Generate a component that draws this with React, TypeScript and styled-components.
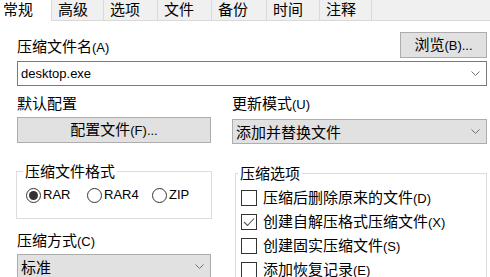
import React from "react";
import styled, { createGlobalStyle } from "styled-components";

const CJK = `"Noto Sans CJK SC", "Noto Sans", sans-serif`;
const LAT = `"Liberation Sans", "Noto Sans", sans-serif`;

const Global = createGlobalStyle`
  html, body { margin: 0; padding: 0; background: #ffffff; }
  body { font-family: ${CJK}; font-size: 15px; color: #000; }
`;

const Page = styled.div`
  width: 490px;
  height: 277px;
  overflow: hidden;
  background: #ffffff;
  font-family: ${CJK};
  font-size: 15px;
  line-height: 20px;
  color: #000;
`;

const Lat = styled.span`
  font-family: ${LAT};
  font-size: 13px;
`;

const TabStrip = styled.div`
  display: flex;
  height: 21px;
`;

const Tab = styled.div<{ $w: number; $active?: boolean }>`
  box-sizing: border-box;
  flex: none;
  width: ${(p) => p.$w}px;
  height: 21px;
  padding-left: ${(p) => (p.$active ? 3 : 6)}px;
  line-height: 18px;
  white-space: nowrap;
  background: ${(p) => (p.$active ? "#ffffff" : "#f0f0f0")};
  border-left: ${(p) => (p.$active ? "none" : "1px solid #d9d9d9")};
  border-bottom: ${(p) => (p.$active ? "none" : "1px solid #d9d9d9")};
`;

const TabFiller = styled.div`
  flex: 1;
  background: #f0f0f0;
  border-left: 1px solid #d9d9d9;
  border-bottom: 1px solid #d9d9d9;
`;

const Body = styled.div`
  padding: 11px 3px 0 17px;
`;

const HeaderRow = styled.div`
  display: flex;
  justify-content: space-between;
  align-items: flex-end;
`;

const Label = styled.div<{ $mt?: number }>`
  margin-top: ${(p) => p.$mt ?? 0}px;
  line-height: 20px;
  white-space: nowrap;
`;

const Button = styled.button<{ $w?: number; $mt?: number }>`
  box-sizing: border-box;
  display: block;
  width: ${(p) => (p.$w ? `${p.$w}px` : "100%")};
  height: 26px;
  margin-top: ${(p) => p.$mt ?? 0}px;
  padding: 0;
  background: #e1e1e1;
  border: 1px solid #adadad;
  border-radius: 0;
  font-family: ${CJK};
  font-size: 15px;
  line-height: 20px;
  color: #000;
  text-align: center;
  white-space: nowrap;
`;

const Combo = styled.div<{ $editable?: boolean; $mt?: number }>`
  box-sizing: border-box;
  display: flex;
  align-items: center;
  justify-content: space-between;
  height: 25px;
  margin-top: ${(p) => p.$mt ?? 0}px;
  padding: 0 6px 0 3px;
  background: ${(p) => (p.$editable ? "#ffffff" : "#e1e1e1")};
  border: 1px solid ${(p) => (p.$editable ? "#7a7a7a" : "#adadad")};
  white-space: nowrap;
`;

const Columns = styled.div`
  display: grid;
  grid-template-columns: 194px 255px;
  column-gap: 21px;
  margin-top: 7px;
`;

const Column = styled.div`
  display: flex;
  flex-direction: column;
`;

const Group = styled.fieldset<{ $ml: number; $w: number; $mt: number; $pt: number; $pb: number }>`
  box-sizing: border-box;
  width: ${(p) => p.$w}px;
  margin: ${(p) => p.$mt}px 0 0 ${(p) => p.$ml}px;
  padding: ${(p) => p.$pt}px 0 ${(p) => p.$pb}px 0;
  border: 1px solid #dcdcdc;
  min-width: 0;
`;

const Legend = styled.legend<{ $indent: number }>`
  margin-left: ${(p) => p.$indent}px;
  padding: 0 2px;
  line-height: 20px;
  white-space: nowrap;
`;

const RadioRow = styled.div`
  display: flex;
  align-items: center;
  height: 20px;
  padding-left: 9px;
`;

const Option = styled.label<{ $w?: number }>`
  display: flex;
  align-items: center;
  gap: 2px;
  width: ${(p) => (p.$w ? `${p.$w}px` : "auto")};
  line-height: 20px;
  white-space: nowrap;
`;

const RadioCircle = styled.span<{ $on?: boolean }>`
  box-sizing: border-box;
  display: flex;
  align-items: center;
  justify-content: center;
  width: 15px;
  height: 15px;
  border: 1px solid #333333;
  border-radius: 50%;
  background: #ffffff;
  &::after {
    content: "";
    display: ${(p) => (p.$on ? "block" : "none")};
    width: 9px;
    height: 9px;
    border-radius: 50%;
    background: #333333;
  }
`;

const CheckList = styled.div`
  display: flex;
  flex-direction: column;
  padding-left: 5px;
`;

const CheckRow = styled.label`
  display: flex;
  align-items: center;
  gap: 6px;
  height: 24px;
  line-height: 20px;
  white-space: nowrap;
`;

const CheckBox = styled.span`
  box-sizing: border-box;
  display: flex;
  align-items: center;
  justify-content: center;
  width: 16px;
  height: 16px;
  border: 1px solid #333333;
  background: #ffffff;
`;

const Chevron = () => (
  <svg width="9" height="5" viewBox="0 0 9 5">
    <polyline points="0.5,0.5 4.5,4.5 8.5,0.5" fill="none" stroke="#707070" strokeWidth="1" />
  </svg>
);

const Tick = () => (
  <svg width="12" height="10" viewBox="0 0 12 10">
    <polyline points="1,5 4.5,8.5 11,1.5" fill="none" stroke="#555555" strokeWidth="1.1" />
  </svg>
);

const tabs: [string, number][] = [
  ["高级", 52],
  ["选项", 54],
  ["文件", 54],
  ["备份", 55],
  ["时间", 53],
  ["注释", 52],
];

const checks: { text: string; key: string; on: boolean }[] = [
  { text: "压缩后删除原来的文件", key: "D", on: false },
  { text: "创建自解压格式压缩文件", key: "X", on: true },
  { text: "创建固实压缩文件", key: "S", on: false },
  { text: "添加恢复记录", key: "E", on: false },
];

export default function App() {
  return (
    <Page>
      <Global />
      <TabStrip>
        <Tab $w={51} $active>常规</Tab>
        {tabs.map(([t, w]) => (
          <Tab key={t} $w={w}>{t}</Tab>
        ))}
        <TabFiller />
      </TabStrip>
      <Body>
        <HeaderRow>
          <Label>压缩文件名<Lat>(A)</Lat></Label>
          <Button $w={87}>浏览<Lat>(B)...</Lat></Button>
        </HeaderRow>
        <Combo $editable $mt={3}>
          <Lat>desktop.exe</Lat>
          <Chevron />
        </Combo>
        <Columns>
          <Column>
            <Label>默认配置</Label>
            <Button $mt={4}>配置文件<Lat>(F)...</Lat></Button>
            <Group $ml={-1} $w={196} $mt={18} $pt={4} $pb={13}>
              <Legend $indent={6}>压缩文件格式</Legend>
              <RadioRow>
                <Option $w={61}><RadioCircle $on /><Lat>RAR</Lat></Option>
                <Option $w={65}><RadioCircle /><Lat>RAR4</Lat></Option>
                <Option><RadioCircle /><Lat>ZIP</Lat></Option>
              </RadioRow>
            </Group>
            <Label $mt={11}>压缩方式<Lat>(C)</Lat></Label>
            <Combo $mt={2}>
              <span>标准</span>
              <Chevron />
            </Combo>
          </Column>
          <Column>
            <Label>更新模式<Lat>(U)</Lat></Label>
            <Combo $mt={4}>
              <span>添加并替换文件</span>
              <Chevron />
            </Combo>
            <Group $ml={3} $w={252} $mt={19} $pt={3} $pb={10}>
              <Legend $indent={2}>压缩选项</Legend>
              <CheckList>
                {checks.map((c) => (
                  <CheckRow key={c.key}>
                    <CheckBox>{c.on && <Tick />}</CheckBox>
                    <span>{c.text}<Lat>({c.key})</Lat></span>
                  </CheckRow>
                ))}
              </CheckList>
            </Group>
          </Column>
        </Columns>
      </Body>
    </Page>
  );
}
